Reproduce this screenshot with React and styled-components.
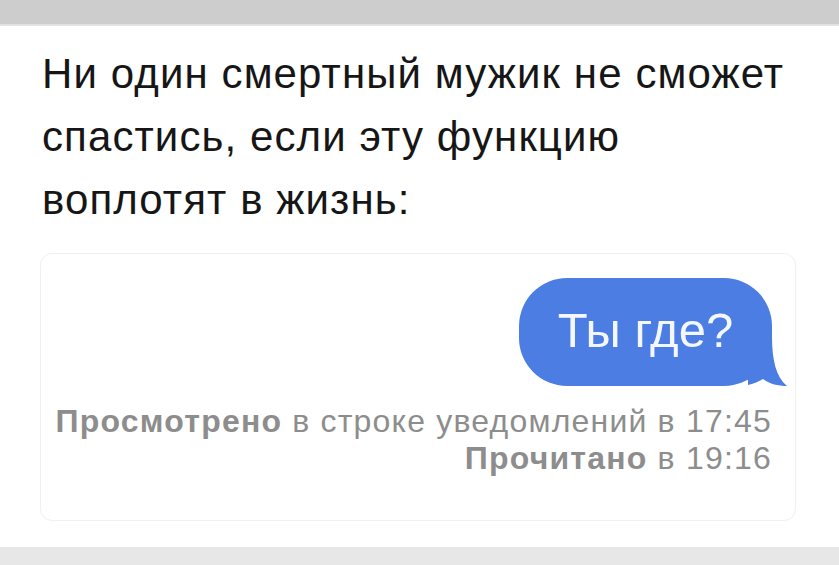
import React from "react";
import styled, { createGlobalStyle } from "styled-components";

const Global = createGlobalStyle`
  html, body {
    margin: 0;
    padding: 0;
    background: #fff;
  }
  body {
    font-family: "Liberation Sans", Arial, sans-serif;
  }
`;

const Page = styled.div`
  width: 839px;
  height: 565px;
  display: flex;
  flex-direction: column;
  background: #fff;
  overflow: hidden;
`;

const TopBar = styled.div`
  height: 24px;
  background: #cdcdcd;
  border-bottom: 2px solid #e2e2e2;
`;

const Heading = styled.p`
  margin: 16px 0 0;
  padding-left: 42px;
  font-size: 42px;
  line-height: 63px;
  color: #161616;
  letter-spacing: 1.1px;
  white-space: nowrap;
`;

const Card = styled.div`
  margin: 22px 0 0 40px;
  width: 756px;
  height: 268px;
  border: 1px solid #f0f0f0;
  border-radius: 12px;
  box-sizing: border-box;
  padding: 24px 23px 0 0;
  display: flex;
  flex-direction: column;
  align-items: flex-end;
`;

const Bubble = styled.div`
  position: relative;
  width: 253px;
  height: 108px;
  margin-right: 0;
  border-radius: 48px;
  background: #4b7de2;
  color: #f4f7ff;
  font-size: 49px;
  display: flex;
  align-items: center;
  justify-content: center;
  padding-bottom: 4px;
  box-sizing: border-box;
`;

const Tail = styled.svg`
  position: absolute;
  right: -16px;
  bottom: 0;
  width: 40px;
  height: 50px;
`;

const Status = styled.div`
  margin-top: 17px;
  display: flex;
  flex-direction: column;
  align-items: flex-end;
  font-size: 32px;
  line-height: 37px;
  letter-spacing: 1.2px;
  color: #8d8d8d;
`;

const Strong = styled.b`
  font-weight: 700;
`;

const BottomBar = styled.div`
  margin-top: auto;
  height: 18px;
  background: #e7e7e7;
`;

export default function App() {
  return (
    <Page>
      <Global />
      <TopBar />
      <Heading>
        Ни один смертный мужик не сможет
        <br />
        спастись, если эту функцию
        <br />
        воплотят в жизнь:
      </Heading>
      <Card>
        <Bubble>
          Ты где?
          <Tail viewBox="0 0 40 50">
            <path
              d="M0 0 H24 C24 24 28 41 39 50 C30 50 22 48 15 43 C10 46 5 48 0 49 Z"
              fill="#4b7de2"
            />
          </Tail>
        </Bubble>
        <Status>
          <span>
            <Strong>Просмотрено</Strong> в строке уведомлений в 17:45
          </span>
          <span>
            <Strong>Прочитано</Strong> в 19:16
          </span>
        </Status>
      </Card>
      <BottomBar />
    </Page>
  );
}
